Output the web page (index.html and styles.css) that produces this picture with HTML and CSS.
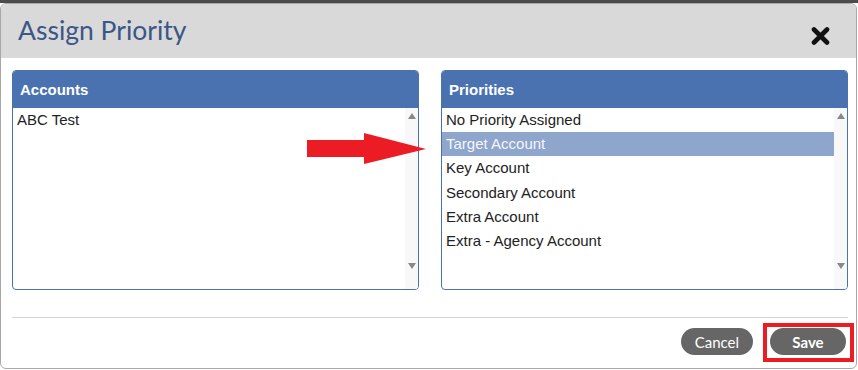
FILE: index.html
```html
<!DOCTYPE html>
<html>
<head>
  <meta charset="UTF-8">
  <title>Assign Priority</title>
  <link rel="stylesheet" href="styles.css">
</head>
<body>
  <div class="dialog">
    <div class="dialog-head">
      <h1>Assign Priority</h1>
      <button class="close-btn" aria-label="Close">
        <svg width="19" height="18" viewBox="0 0 19 18">
          <path d="M3 2.5 L16 15.5 M16 2.5 L3 15.5" stroke="#111" stroke-width="4.6" stroke-linecap="round"/>
        </svg>
      </button>
    </div>

    <div class="dialog-body">
      <div class="panel">
        <div class="panel-head">Accounts</div>
        <div class="list">
          <ul class="items">
            <li>ABC Test</li>
          </ul>
          <div class="scrollbar"><span class="up"></span><span class="down"></span></div>
        </div>
      </div>

      <div class="panel">
        <div class="panel-head">Priorities</div>
        <div class="list">
          <ul class="items">
            <li>No Priority Assigned</li>
            <li class="selected">Target Account</li>
            <li>Key Account</li>
            <li>Secondary Account</li>
            <li>Extra Account</li>
            <li>Extra - Agency Account</li>
          </ul>
          <div class="scrollbar"><span class="up"></span><span class="down"></span></div>
        </div>
      </div>

      <!-- annotation arrow -->
      <svg class="arrow" width="120" height="32" viewBox="0 0 120 32">
        <polygon points="0,7 57,7 57,0 119,16 57,31 57,24 0,24" fill="#ec1c24"/>
      </svg>
    </div>

    <div class="dialog-foot">
      <button class="btn">Cancel</button>
      <span class="mark"><button class="btn btn-save">Save</button></span>
    </div>
  </div>
</body>
</html>
```

FILE: styles.css
```css
html, body {
  margin: 0;
  background: #fff;
}

body {
  border-top: 3px solid #4b4b4b;
  font-family: Arial, "Liberation Sans", sans-serif;
}

.dialog {
  width: 855px;
  height: 364px;
  border: 1px solid #a8a8a8;
  border-radius: 6px;
  overflow: hidden;
  display: flex;
  flex-direction: column;
}

.dialog-head {
  background: #d9d9d9;
  height: 54px;
  display: flex;
  align-items: center;
  justify-content: space-between;
  padding: 0 26px 0 17px;
}

.dialog-head h1 {
  margin: 0;
  font-family: Lato, sans-serif;
  font-weight: normal;
  font-size: 26.5px;
  color: #3a5788;
  padding-bottom: 2px;
}

.close-btn {
  border: 0;
  background: none;
  padding: 0;
  margin-top: 10px;
  display: flex;
}

.dialog-body {
  position: relative;
  display: flex;
  gap: 22px;
  padding: 12px 7px 0 11px;
}

.panel {
  width: 405px;
  height: 218px;
  border: 1px solid #4a72b0;
  border-radius: 4px;
  overflow: hidden;
  display: flex;
  flex-direction: column;
}

.panel-head {
  background: #4a72b0;
  color: #fff;
  font-weight: bold;
  font-size: 15px;
  height: 37px;
  line-height: 37px;
  padding-left: 7px;
}

.list {
  flex: 1;
  display: flex;
}

.items {
  flex: 1;
  list-style: none;
  margin: 0;
  padding: 0;
}

.items li {
  height: 24.2px;
  line-height: 24px;
  font-size: 15px;
  color: #222;
  padding-left: 4px;
}

.items li.selected {
  background: #8ea5cc;
  color: #f4f6fb;
}

.scrollbar {
  width: 13px;
  background: #f8f8f8;
  display: flex;
  flex-direction: column;
  justify-content: space-between;
  align-items: center;
  padding: 5px 0 20px;
}

.scrollbar .up,
.scrollbar .down {
  width: 0;
  height: 0;
  border-left: 4.5px solid transparent;
  border-right: 4.5px solid transparent;
}

.scrollbar .up {
  border-bottom: 6px solid #888;
}

.scrollbar .down {
  border-top: 6px solid #888;
}

.arrow {
  position: absolute;
  left: 306px;
  top: 75px;
}

.dialog-foot {
  margin: 27px 8px 0 11px;
  border-top: 1px solid #d3d3d3;
  display: flex;
  justify-content: flex-end;
  align-items: flex-start;
  gap: 10px;
  padding: 5px 0 0;
}

.btn {
  background: #666;
  color: #fff;
  border: 0;
  border-radius: 14px;
  height: 27px;
  font-family: Lato, sans-serif;
  font-size: 15px;
  padding: 0 14px;
  margin-top: 5px;
}

.btn-save {
  width: 76px;
  margin: 0;
  font-weight: bold;
}

.mark {
  border: 4px solid #ec1c24;
  padding: 1px 4px 3px 3px;
  margin-right: -6px;
  display: flex;
}
```
